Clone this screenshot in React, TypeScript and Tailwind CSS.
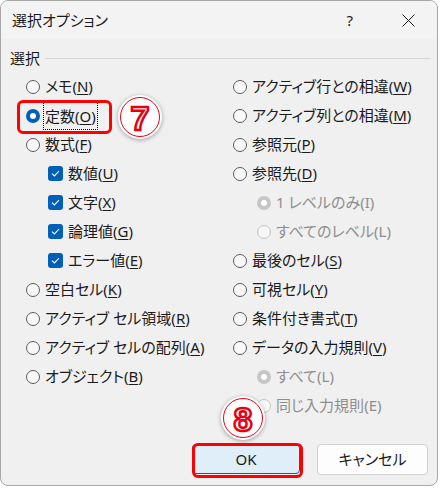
import type { ReactNode } from "react";

const font = "font-['Noto_Sans','Noto_Sans_CJK_JP',sans-serif] [font-feature-settings:'palt']";

function Radio({ checked = false, disabled = false }: { checked?: boolean; disabled?: boolean }) {
    if (checked) {
        return (
            <span className={`w-[14px] h-[14px] rounded-full flex items-center justify-center shrink-0 ${disabled ? "bg-[#c6c6c6]" : "bg-[#005fb8]"}`}>
                <span className="w-[6px] h-[6px] rounded-full bg-white" />
            </span>
        );
    }
    return (
        <span className={`w-[14px] h-[14px] rounded-full border shrink-0 bg-[#f8f8f8] ${disabled ? "border-[#c6c6c6]" : "border-[#5c5c5c]"}`} />
    );
}

function Check() {
    return (
        <span className="w-[15px] h-[15px] rounded-[3px] bg-[#005fb8] flex items-center justify-center shrink-0">
            <svg width="9" height="7" viewBox="0 0 9 7" fill="none">
                <path d="M1 3.6 L3.4 6 L8 1.2" stroke="white" strokeWidth="1.1" />
            </svg>
        </span>
    );
}

function Label({ text, k, disabled = false }: { text: string; k: string; disabled?: boolean }) {
    return (
        <span className={`text-[15px] leading-none whitespace-nowrap ${disabled ? "text-[#8e8e8e]" : "text-[#1b1b1b]"}`}>
            {text}(<span className={disabled ? "" : "underline underline-offset-2"}>{k}</span>)
        </span>
    );
}

function Row({ indent = 0, control, children }: { indent?: number; control: ReactNode; children: ReactNode }) {
    return (
        <div className={`h-[29px] flex items-center gap-[5px] ${indent === 1 ? "pl-[22px]" : indent === 2 ? "pl-[24px]" : ""}`}>
            {control}
            {children}
        </div>
    );
}

function Badge({ n }: { n: string }) {
    return (
        <div className="w-[44px] h-[44px] rounded-full bg-white shadow-[0_1px_4px_rgba(0,0,0,0.35)] flex items-center justify-center">
            <div className="w-[40px] h-[40px] rounded-full border-[1.5px] border-[#e60012] flex items-center justify-center">
                <span className="text-[34px] font-bold leading-none text-white [-webkit-text-stroke:2.5px_#e60012] font-['Liberation_Sans',sans-serif] mt-[1px]">
                    {n}
                </span>
            </div>
        </div>
    );
}

export default function App() {
    return (
        <div className={`w-[440px] h-[488px] bg-white ${font}`}>
            <div className="relative w-[438px] h-[486px] border border-[#a8a8a8] rounded-[8px] bg-[#f0f0f0] flex flex-col overflow-hidden">
                <div className="h-[38px] bg-[#f3f3f3] flex items-center pl-[11px] pr-[22px] shrink-0">
                    <span className="text-[15px] text-[#1b1b1b] leading-none">選択オプション</span>
                    <span className="ml-auto text-[15px] text-[#1b1b1b] leading-none mr-[49px]">?</span>
                    <svg width="13" height="13" viewBox="0 0 13 13">
                        <path d="M0.5 0.5 L12.5 12.5 M12.5 0.5 L0.5 12.5" stroke="#1b1b1b" strokeWidth="1" />
                    </svg>
                </div>

                <div className="flex items-center pl-[9px] pr-[7px] mt-[11px] h-[16px]">
                    <span className="text-[15px] text-[#1b1b1b] leading-none">選択</span>
                    <div className="flex-1 h-px bg-[#d6d6d6] ml-[5px]" />
                </div>

                <div className="grid grid-cols-[232px_1fr] mt-[6px]">
                    <div className="flex flex-col pl-[25px]">
                        <Row control={<Radio />}><Label text="メモ" k="N" /></Row>
                        <Row control={<Radio checked />}>
                            <span className="outline outline-1 outline-dotted outline-black outline-offset-[1px]">
                                <Label text="定数" k="O" />
                            </span>
                        </Row>
                        <Row control={<Radio />}><Label text="数式" k="F" /></Row>
                        <Row indent={1} control={<Check />}><Label text="数値" k="U" /></Row>
                        <Row indent={1} control={<Check />}><Label text="文字" k="X" /></Row>
                        <Row indent={1} control={<Check />}><Label text="論理値" k="G" /></Row>
                        <Row indent={1} control={<Check />}><Label text="エラー値" k="E" /></Row>
                        <Row control={<Radio />}><Label text="空白セル" k="K" /></Row>
                        <Row control={<Radio />}><Label text="アクティブ セル領域" k="R" /></Row>
                        <Row control={<Radio />}><Label text="アクティブ セルの配列" k="A" /></Row>
                        <Row control={<Radio />}><Label text="オブジェクト" k="B" /></Row>
                    </div>
                    <div className="flex flex-col">
                        <Row control={<Radio />}><Label text="アクティブ行との相違" k="W" /></Row>
                        <Row control={<Radio />}><Label text="アクティブ列との相違" k="M" /></Row>
                        <Row control={<Radio />}><Label text="参照元" k="P" /></Row>
                        <Row control={<Radio />}><Label text="参照先" k="D" /></Row>
                        <Row indent={2} control={<Radio checked disabled />}><Label text="1 レベルのみ" k="I" disabled /></Row>
                        <Row indent={2} control={<Radio disabled />}><Label text="すべてのレベル" k="L" disabled /></Row>
                        <Row control={<Radio />}><Label text="最後のセル" k="S" /></Row>
                        <Row control={<Radio />}><Label text="可視セル" k="Y" /></Row>
                        <Row control={<Radio />}><Label text="条件付き書式" k="T" /></Row>
                        <Row control={<Radio />}><Label text="データの入力規則" k="V" /></Row>
                        <Row indent={2} control={<Radio checked disabled />}><Label text="すべて" k="L" disabled /></Row>
                        <Row indent={2} control={<Radio disabled />}><Label text="同じ入力規則" k="E" disabled /></Row>
                    </div>
                </div>

                <div className="mt-auto mb-[10px] flex justify-end gap-[17px] pr-[9px]">
                    <button className="w-[108px] h-[30px] rounded-[4px] bg-[#e0eef9] border border-[#005fb8] text-[15px] text-[#1b1b1b] leading-none">
                        OK
                    </button>
                    <button className="w-[111px] h-[31px] rounded-[4px] bg-[#fdfdfd] border border-[#d0d0d0] text-[15px] text-[#1b1b1b] leading-none">
                        キャンセル
                    </button>
                </div>

                {/* callouts */}
                <div className="absolute left-[16px] top-[99px] w-[95px] h-[34px] border-[3px] border-[#ff0000] rounded-[6px]" />
                <div className="absolute left-[117px] top-[94px]"><Badge n="7" /></div>
                <div className="absolute left-[191px] top-[442px] w-[111px] h-[35px] border-[3px] border-[#ff0000] rounded-[6px]" />
                <div className="absolute left-[220px] top-[395px]"><Badge n="8" /></div>
            </div>
        </div>
    );
}
